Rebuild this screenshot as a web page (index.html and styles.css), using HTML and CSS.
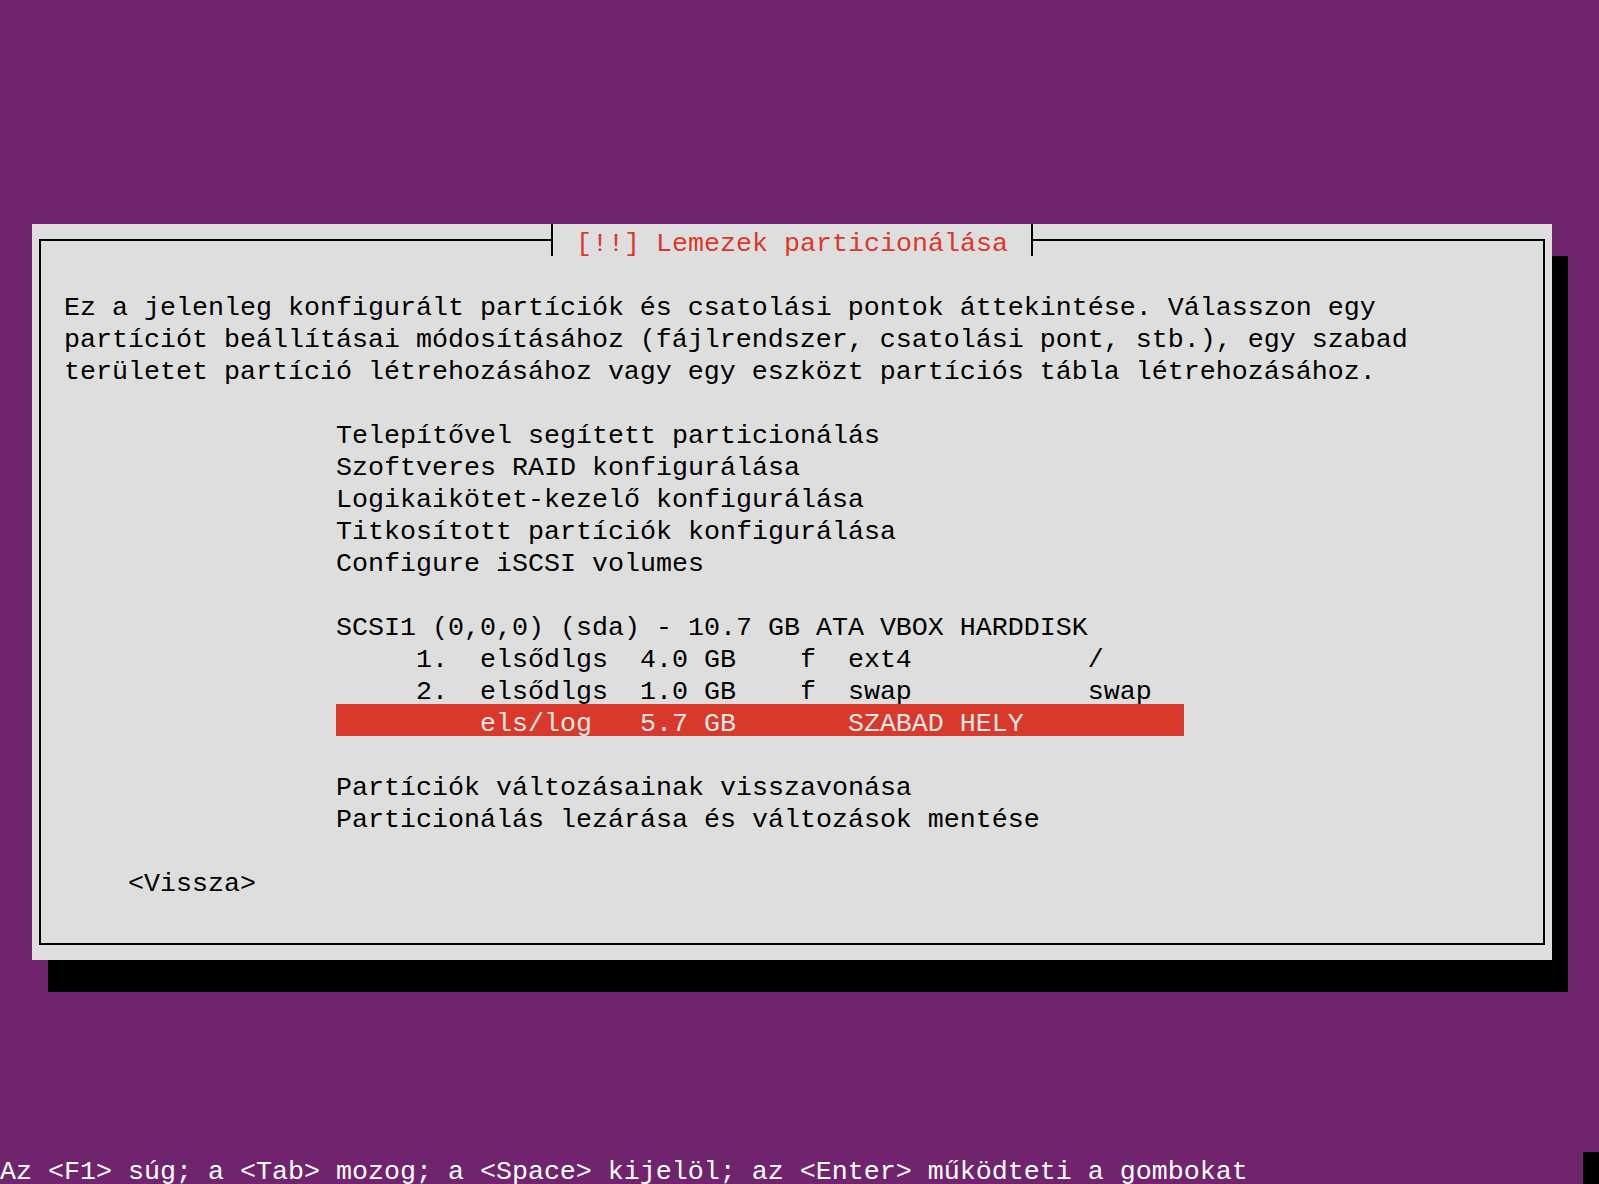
FILE: index.html
```html
<!DOCTYPE html>
<html lang="hu">
<head>
    <meta charset="UTF-8">
    <meta name="viewport" content="width=device-width, initial-scale=1.0">
    <title>Lemezek particionálása</title>
    <link rel="stylesheet" href="styles.css">
</head>
<body>
    <div class="kepernyo">
        <div class="ablak">
            <div class="keret">
                <div class="cim">[!!] Lemezek particionálása</div>

                <div class="leiras">
                    <div class="sor">Ez a jelenleg konfigurált partíciók és csatolási pontok áttekintése. Válasszon egy</div>
                    <div class="sor">partíciót beállításai módosításához (fájlrendszer, csatolási pont, stb.), egy szabad</div>
                    <div class="sor">területet partíció létrehozásához vagy egy eszközt partíciós tábla létrehozásához.</div>
                </div>

                <!-- Menü elemek -->
                <div class="menu">
                    <div class="csoport">
                        <div class="sor">Telepítővel segített particionálás</div>
                        <div class="sor">Szoftveres RAID konfigurálása</div>
                        <div class="sor">Logikaikötet-kezelő konfigurálása</div>
                        <div class="sor">Titkosított partíciók konfigurálása</div>
                        <div class="sor">Configure iSCSI volumes</div>
                    </div>
                    <div class="csoport">
                        <div class="sor">SCSI1 (0,0,0) (sda) - 10.7 GB ATA VBOX HARDDISK</div>
                        <div class="sor">     1.  elsődlgs  4.0 GB    f  ext4           /</div>
                        <div class="sor">     2.  elsődlgs  1.0 GB    f  swap           swap</div>
                        <div class="sor kijelolt">         els/log   5.7 GB       SZABAD HELY</div>
                    </div>
                    <div class="csoport">
                        <div class="sor">Partíciók változásainak visszavonása</div>
                        <div class="sor">Particionálás lezárása és változások mentése</div>
                    </div>
                </div>

                <div class="gombok">
                    <div class="sor">&lt;Vissza&gt;</div>
                </div>
            </div>
        </div>

        <div class="sugo">
            <span class="sor">Az &lt;F1&gt; súg; a &lt;Tab&gt; mozog; a &lt;Space&gt; kijelöl; az &lt;Enter&gt; működteti a gombokat</span>
            <span class="kurzor"></span>
        </div>
    </div>
</body>
</html>
```

FILE: styles.css
```css
body {
    margin: 0;
    background-color: #70246e;
    font-family: "Liberation Mono", "DejaVu Sans Mono", monospace;
    font-size: 26.6667px;
    color: #000;
    overflow: hidden;
}

.kepernyo {
    display: flex;
    flex-direction: column;
    height: 1184px;
}

/* egy karaktercella 16x32 px */
.sor {
    height: 32px;
    line-height: 40px;
    white-space: pre;
}

.ablak {
    margin: 224px 0 0 32px;
    width: 1520px;
    height: 736px;
    padding: 15px 7px;
    box-sizing: border-box;
    background-color: #dedede;
    box-shadow: 16px 32px 0 #000;
}

.keret {
    position: relative;
    height: 100%;
    box-sizing: border-box;
    border: 2px solid #000;
    padding: 47px 0 0 23px;
}

.cim {
    position: absolute;
    top: -17px;
    left: 510px;
    height: 32px;
    line-height: 40px;
    padding: 0 23px;
    background-color: #dedede;
    border-left: 2px solid #000;
    border-right: 2px solid #000;
    color: #d9392b;
    white-space: pre;
}

.menu {
    margin: 32px 0 0 272px;
    display: flex;
    flex-direction: column;
    gap: 32px;
}

.kijelolt {
    width: 848px;
    background-color: #d9392b;
    color: #e6e6e6;
}

.gombok {
    margin: 32px 0 0 64px;
}

.sugo {
    margin-top: auto;
    display: flex;
    justify-content: space-between;
    color: #fff;
}

.kurzor {
    width: 16px;
    height: 32px;
    background-color: #000;
}
```
